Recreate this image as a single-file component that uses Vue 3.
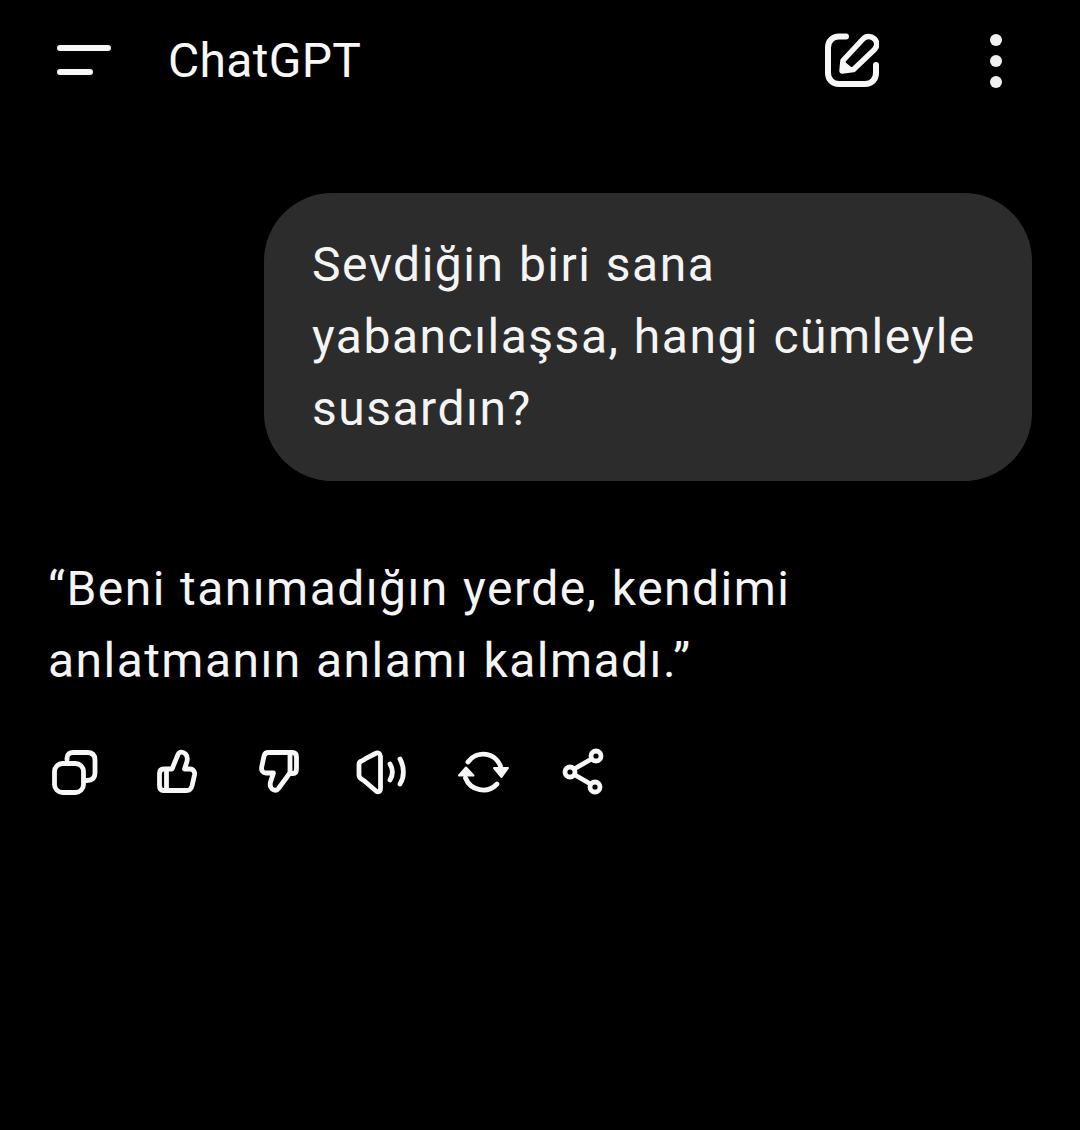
<script setup>
</script>

<template>
  <div class="page">
    <header class="bar">
      <svg class="menu" width="54" height="30" viewBox="0 0 54 30" aria-label="Menu">
        <path d="M3 3H51M3 27H33" />
      </svg>
      <h1 class="title">ChatGPT</h1>
      <svg class="edit" width="54" height="54" viewBox="0 0 54 54" aria-label="New chat">
        <path d="M21 3.500H14C7.500 3.500 3 8 3 14.500V40C3 46.500 7.500 51 14 51H40C46.500 51 51 46.500 51 40V32" />
        <path class="pen" d="M17 38L18 27.500L38 6C41 2.800 46 2.800 49.500 5.800C52.500 9 52.500 13 49.500 16.500L28.500 36.500Z" />
        <path class="nib" d="M17.500 37.500L18.500 29L27 36Z" />
      </svg>
      <div class="dots" aria-label="More">
        <span></span><span></span><span></span>
      </div>
    </header>

    <main class="chat">
      <div class="bubble">Sevdiğin biri sana yabancılaşsa, hangi cümleyle susardın?</div>
      <p class="answer">“Beni tanımadığın yerde, kendimi anlatmanın anlamı kalmadı.”</p>

      <div class="actions">
        <svg viewBox="0 0 60 60" aria-label="Copy">
          <path d="M22 18V16C22 12 25 10.500 28 10.500H42C47 10.500 50 13 50 18V31C50 36 47 38.500 42 38.500H40" />
          <rect x="9.500" y="21.500" width="29" height="29" rx="8" />
        </svg>
        <svg viewBox="0 0 60 60" aria-label="Good">
          <path d="M19 48.500H16.500C13.500 48.500 12.500 46 12.500 43.500V31.500C12.500 28.500 14 27 17 27H25L31 12.500C32.500 9.500 36 9.500 38.500 12C40.500 14 40.500 18 39.500 21L37.500 27H43C46.500 27 48 30 47.500 33L45 44C44.200 47 43 48.500 39.500 48.500Z" />
          <path d="M19.500 27.500V48" />
        </svg>
        <svg viewBox="0 0 60 60" aria-label="Bad">
          <path d="M41 10.500H19.500C17 10.500 15.500 12 15 14L12.700 25C12 28.500 14 31 17 31H24.500L21.500 40C20.500 44 22 47 25 48C27 48.700 28.500 48 29.500 46.500L40.500 31.500H44C46 31.500 47.500 30 47.500 27V15C47.500 12 46 10.500 43 10.500Z" />
          <path d="M41 11V31" />
        </svg>
        <svg viewBox="0 0 60 60" aria-label="Read aloud">
          <path d="M29.500 14.500V46.500C29.500 50 27 50.500 25 49L14 39.500C13 38.500 12 37.800 11 37.300C9 36.300 8 35 8 33V22.500C8 20.500 9 19.300 11 18.800C12.500 18.300 14 17.300 15 16.300L24.500 11.500C27 10 29.500 11.500 29.500 14.500Z" />
          <path d="M39 22C42 27 42 33 39 38" />
          <path d="M49 17C53.500 25 53.500 35 49 42" />
        </svg>
        <svg viewBox="0 0 60 60" aria-label="Regenerate">
          <path d="M15 20A18.500 18.500 0 0 1 48 26" />
          <path d="M12.500 36A19 19 0 0 0 44 42" />
          <path class="tip" d="M6 33.500L13 25.500L20.500 33.500Z" />
          <path class="tip" d="M41 26H55L48.500 35Z" />
        </svg>
        <svg viewBox="0 0 60 60" aria-label="Share">
          <circle cx="41" cy="14" r="5" />
          <circle cx="15" cy="30" r="5" />
          <circle cx="40" cy="45" r="5" />
          <path d="M20 26.500L36.500 17M20 33L35.500 42" />
        </svg>
      </div>
    </main>
  </div>
</template>

<style scoped>
.page {
  width: 1080px;
  height: 1130px;
  background: #000;
  color: #f4f4f4;
  font-family: Roboto, "Noto Sans", sans-serif;
  overflow: hidden;
}
.bar {
  height: 120px;
  display: flex;
  align-items: center;
  padding: 0 78px 0 57px;
  box-sizing: border-box;
}
svg path,
svg rect,
svg circle {
  fill: none;
  stroke: #f7f7f7;
  stroke-width: 4.800;
  stroke-linecap: round;
  stroke-linejoin: round;
}
.menu path {
  stroke-width: 6;
}
.title {
  margin: 2px 0 0 57px;
  font-size: 48px;
  font-weight: 400;
  line-height: 60px;
  letter-spacing: 0.3px;
  color: #f7f7f7;
}
.edit {
  margin-left: auto;
}
.edit path {
  stroke-width: 6;
}
.edit path.pen {
  stroke-width: 5.500;
}
.edit path.nib {
  fill: #f7f7f7;
  stroke-width: 2;
}
.actions svg path.tip {
  fill: #f7f7f7;
  stroke-width: 2;
}
.dots {
  margin: 2px 0 0 111px;
  display: flex;
  flex-direction: column;
  gap: 9px;
}
.dots span {
  width: 12px;
  height: 12px;
  border-radius: 50%;
  background: #f0f0f0;
}
.chat {
  padding-top: 73px;
  display: flex;
  flex-direction: column;
}
.bubble {
  align-self: flex-end;
  margin-right: 48px;
  width: 768px;
  box-sizing: border-box;
  padding: 36px 48px;
  background: #2c2c2c;
  border-radius: 68px;
  font-size: 48px;
  line-height: 72px;
  letter-spacing: 1.500px;
  word-spacing: 1px;
}
.answer {
  margin: 72px 48px 0 48px;
  font-size: 48px;
  line-height: 72px;
  letter-spacing: 1.450px;
  word-spacing: 1px;
}
.actions {
  margin: 45px 0 0 45px;
  display: flex;
  gap: 42px;
}
.actions svg {
  width: 60px;
  height: 60px;
  flex: none;
}
</style>
